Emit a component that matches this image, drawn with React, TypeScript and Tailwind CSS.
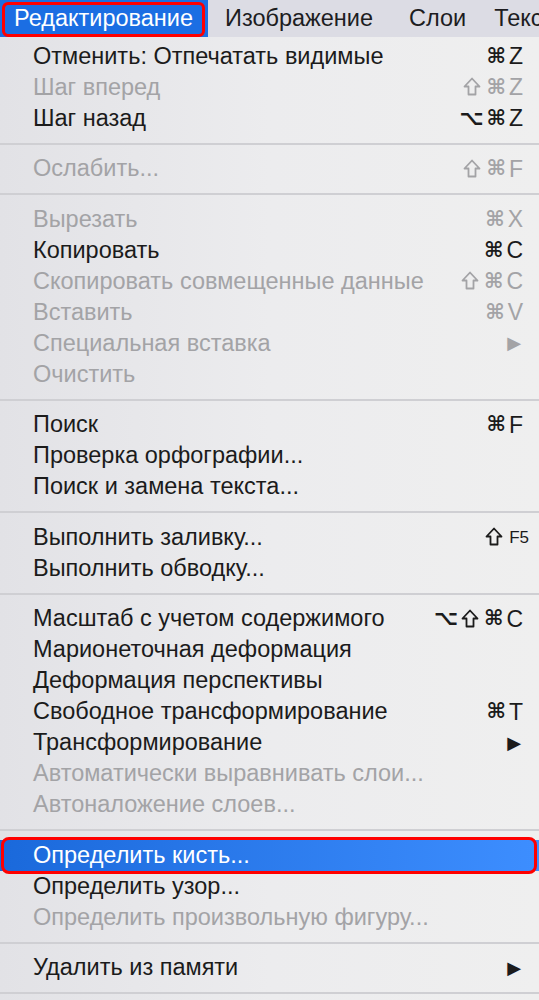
import React from "react";

type Item =
  | { sep: true }
  | {
      sep?: false;
      label: string;
      keys?: string;
      off?: boolean;
      sub?: boolean;
      active?: boolean;
      f5?: boolean;
    };

// Меню "Редактирование" (Photoshop, macOS)
const items: Item[] = [
  { label: "Отменить: Отпечатать видимые", keys: "⌘Z" },
  { label: "Шаг вперед", keys: "⇧⌘Z", off: true },
  { label: "Шаг назад", keys: "⌥⌘Z" },
  { sep: true },
  { label: "Ослабить...", keys: "⇧⌘F", off: true },
  { sep: true },
  { label: "Вырезать", keys: "⌘X", off: true },
  { label: "Копировать", keys: "⌘C" },
  { label: "Скопировать совмещенные данные", keys: "⇧⌘C", off: true },
  { label: "Вставить", keys: "⌘V", off: true },
  { label: "Специальная вставка", sub: true, off: true },
  { label: "Очистить", off: true },
  { sep: true },
  { label: "Поиск", keys: "⌘F" },
  { label: "Проверка орфографии..." },
  { label: "Поиск и замена текста..." },
  { sep: true },
  { label: "Выполнить заливку...", f5: true },
  { label: "Выполнить обводку..." },
  { sep: true },
  { label: "Масштаб с учетом содержимого", keys: "⌥⇧⌘C" },
  { label: "Марионеточная деформация" },
  { label: "Деформация перспективы" },
  { label: "Свободное трансформирование", keys: "⌘T" },
  { label: "Трансформирование", sub: true },
  { label: "Автоматически выравнивать слои...", off: true },
  { label: "Автоналожение слоев...", off: true },
  { sep: true },
  { label: "Определить кисть...", active: true },
  { label: "Определить узор..." },
  { label: "Определить произвольную фигуру...", off: true },
  { sep: true },
  { label: "Удалить из памяти", sub: true },
  { sep: true },
];

const font = { fontFamily: '"Liberation Sans", "DejaVu Sans", Arial, sans-serif' };
const sym = { fontFamily: '"DejaVu Sans", sans-serif' };

// Стрелка Shift (контурная)
function ShiftIcon() {
  return (
    <svg width="18" height="19" viewBox="0 0 18 19" className="mr-[2px] -mt-[2px]">
      <path
        d="M9 1.5 L16.5 9.5 H12.5 V17.5 H5.5 V9.5 H1.5 Z"
        fill="none"
        stroke="currentColor"
        strokeWidth="1.8"
        strokeLinejoin="round"
      />
    </svg>
  );
}

function Keys({ keys, off }: { keys: string; off?: boolean }) {
  return (
    <span className={`flex items-center gap-[3px] text-[23px] ${off ? "text-[#a3a3a6]" : "text-[#1b1b1b]"}`}>
      {keys.split("").map((k, i) =>
        k === "⇧" ? (
          <ShiftIcon key={i} />
        ) : k === "⌘" || k === "⌥" ? (
          <span key={i} className="text-[21px] font-bold" style={sym}>
            {k}
          </span>
        ) : (
          <span key={i}>{k}</span>
        )
      )}
    </span>
  );
}

export default function App() {
  return (
    <div className="h-[1000px] w-[539px] overflow-hidden bg-[#e8e8eb]" style={font}>
      {/* строка меню */}
      <div className="flex h-[37px] items-center whitespace-nowrap bg-[#dcdce4] text-[23.5px] text-[#1d1d1f]">
        <div className="relative flex h-full w-[208px] shrink-0 items-center bg-[#1b6ee3] pl-[14px] text-white">
          Редактирование
          <div className="absolute left-[2px] right-[3px] top-[2px] bottom-[0px] rounded-[6px] border-[3px] border-[#ff0000]" />
        </div>
        <span className="shrink-0 pl-[17px]">Изображение</span>
        <span className="shrink-0 pl-[36px]">Слои</span>
        <span className="shrink-0 pl-[28px]">Текст</span>
      </div>

      {/* выпадающее меню */}
      <div className="bg-gradient-to-r from-[#e2e2e6] via-[#ececee] to-[#efefef] pt-[4px]">
        {items.map((it, i) =>
          it.sep ? (
            <div key={i} className="flex h-[19.5px] items-center">
              <div className="h-[2px] w-full bg-[#cfcfd3]" />
            </div>
          ) : (
            <div
              key={i}
              className={`relative flex h-[31px] items-center justify-between pl-[33px] pr-[16px] text-[23.5px] ${
                it.active
                  ? "bg-gradient-to-r from-[#1a69db] to-[#3d8eff] text-white"
                  : it.off
                  ? "text-[#a3a3a6]"
                  : "text-[#1b1b1b]"
              }`}
            >
              <span className="whitespace-nowrap">{it.label}</span>
              {it.keys ? <Keys keys={it.keys} off={it.off} /> : null}
              {it.sub ? <span className="pr-[2px] text-[18px]">▶</span> : null}
              {it.f5 ? (
                <span className="-mr-[6px] flex items-center gap-[4px]">
                  <ShiftIcon />
                  <span className="text-[17px]">F5</span>
                </span>
              ) : null}
              {it.active ? (
                <div className="absolute -top-[3px] -bottom-[3px] left-[1px] right-[2px] rounded-[8px] border-[3px] border-[#ff0000]" />
              ) : null}
            </div>
          )
        )}
      </div>
    </div>
  );
}
